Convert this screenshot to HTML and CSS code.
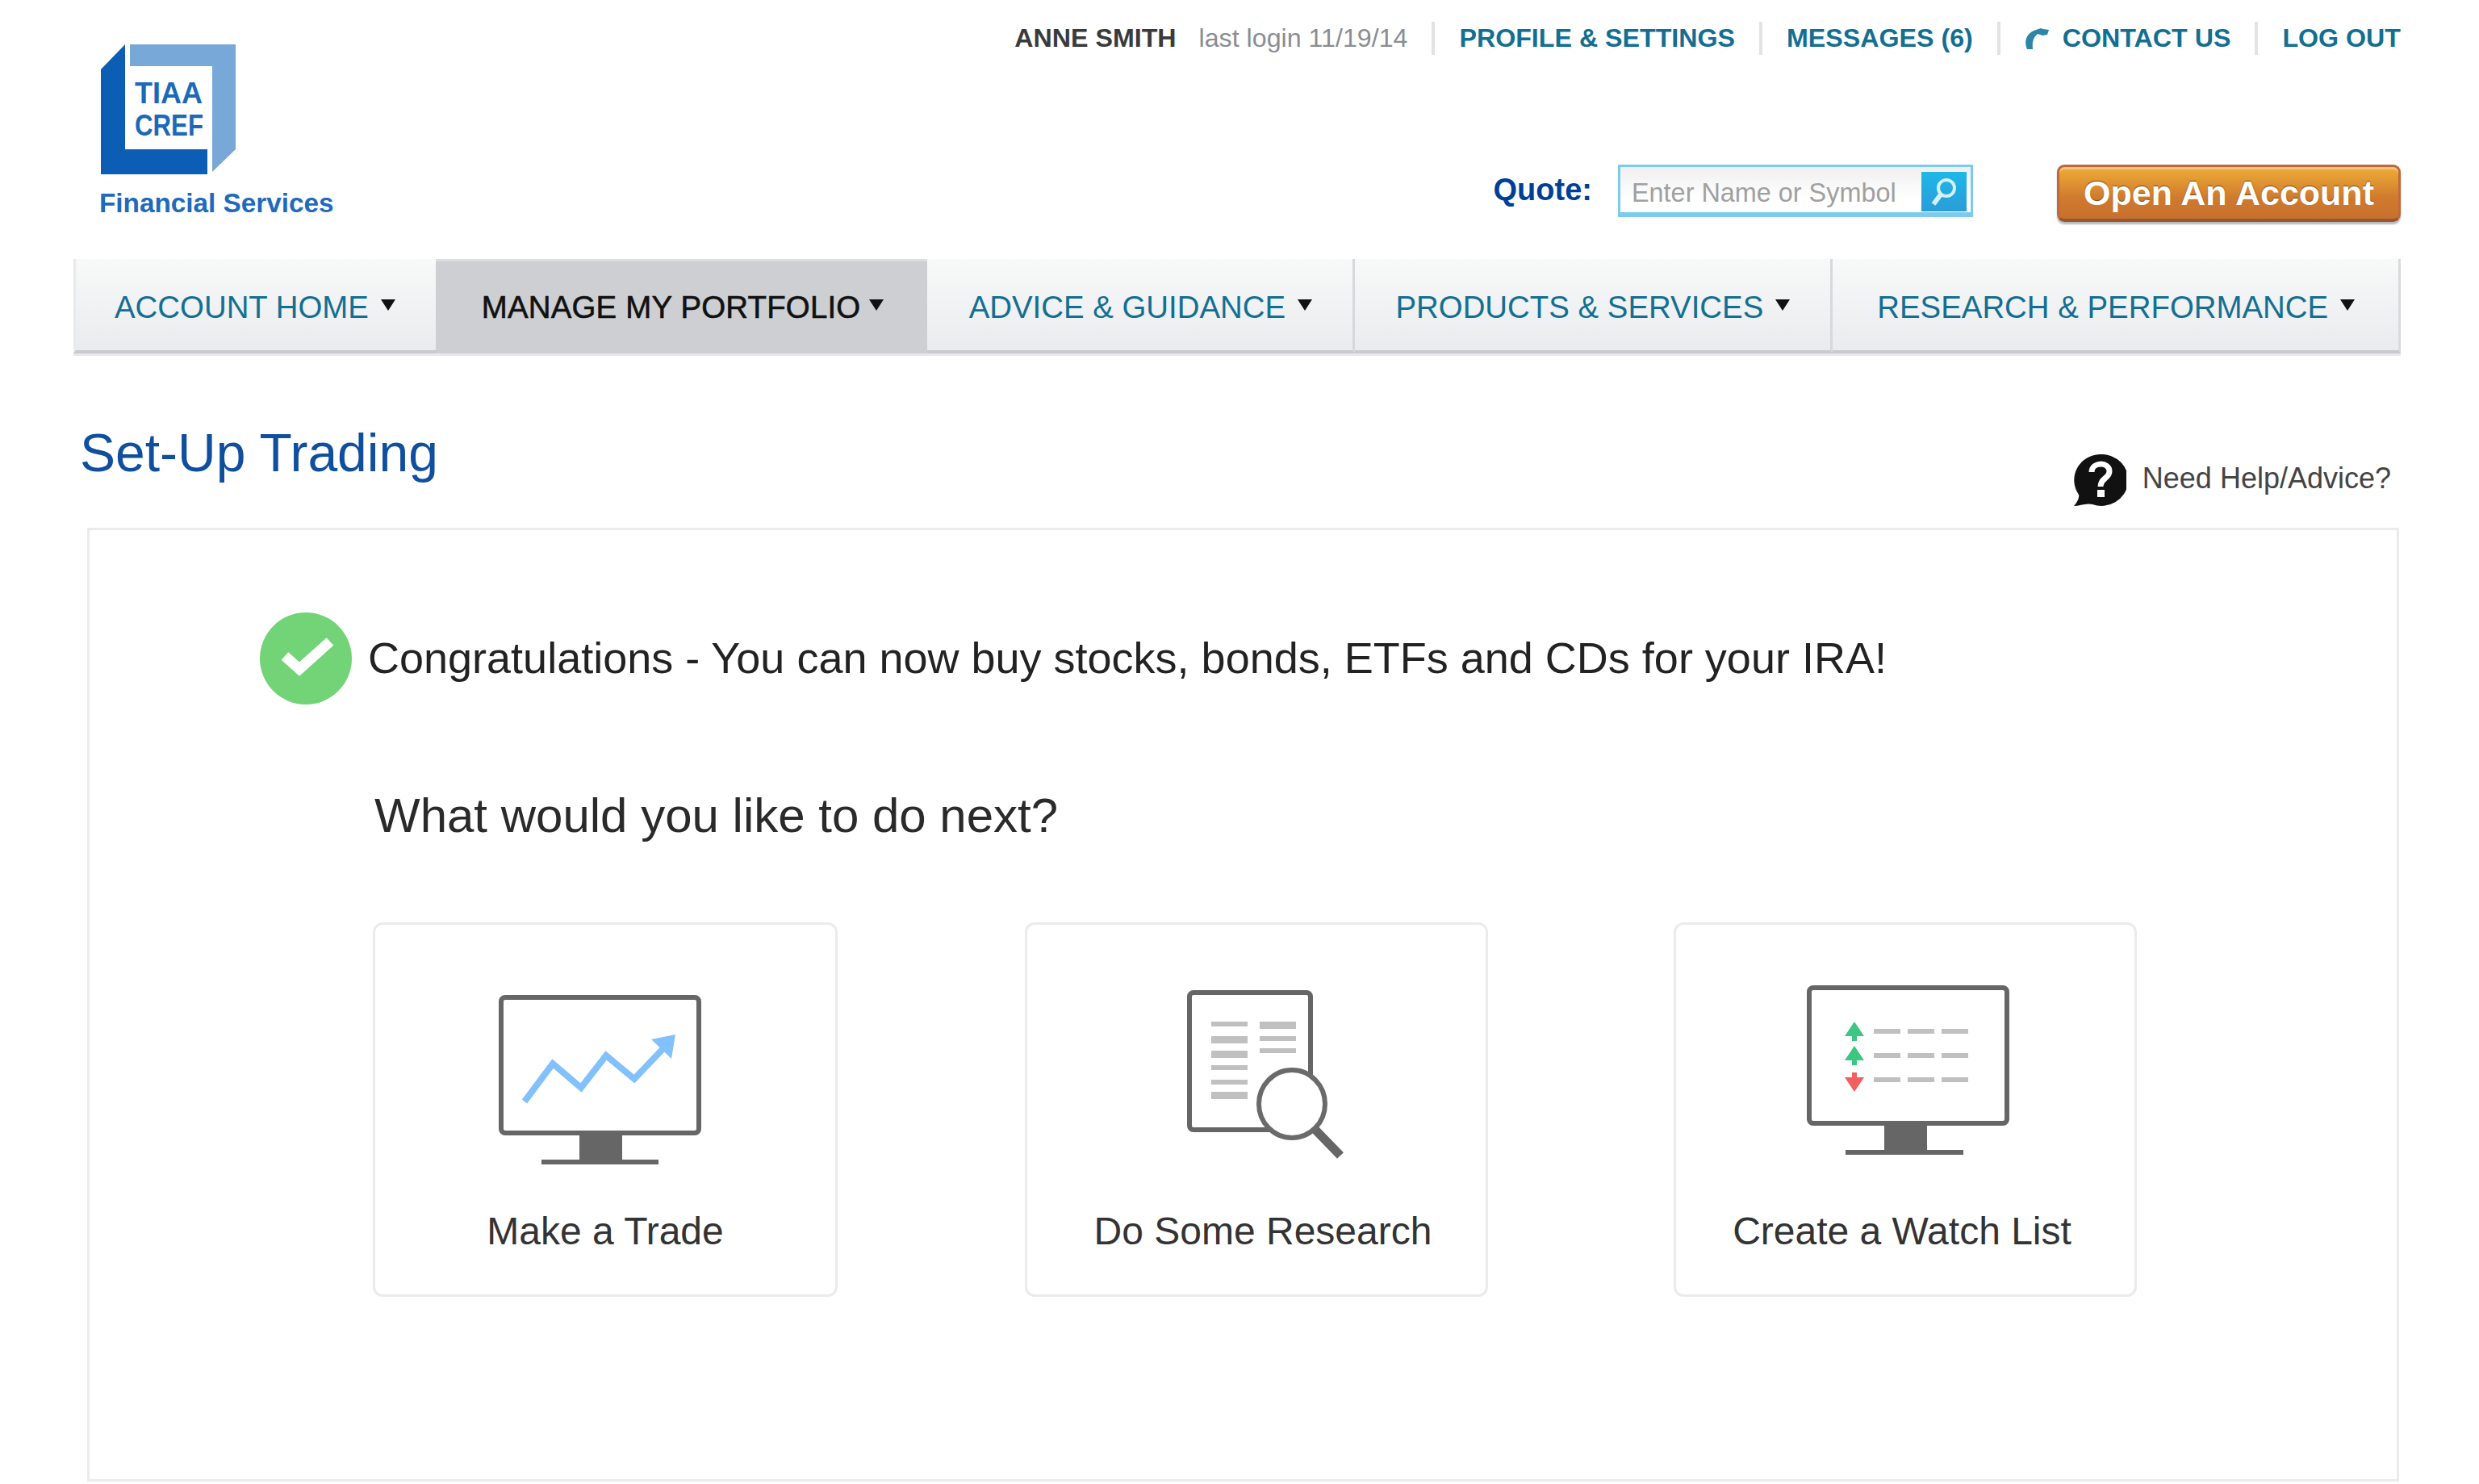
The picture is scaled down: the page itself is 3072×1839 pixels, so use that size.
FILE: index.html
```html
<!DOCTYPE html>
<html lang="en">
<head>
<meta charset="utf-8">
<title>Set-Up Trading</title>
<link rel="stylesheet" href="styles.css">
</head>
<body>
<div class="page">
  <header class="header">
    <div class="brand">
      <svg class="logo" width="170" height="164" viewBox="0 0 170 164">
        <polygon class="logo-dark" points="1,34 31,3 31,133 133,133 133,164 1,164"/>
        <polygon class="logo-light" points="37,3 168,3 168,133 139,161 139,30 37,30"/>
        <text class="logo-text" x="43" y="76" textLength="84" lengthAdjust="spacingAndGlyphs">TIAA</text>
        <text class="logo-text" x="43" y="116" textLength="85" lengthAdjust="spacingAndGlyphs">CREF</text>
      </svg>
      <div class="brand-name">Financial Services</div>
    </div>
    <div class="header-right">
      <div class="util">
        <span class="util-name">ANNE SMITH</span>
        <span class="util-login">last login 11/19/14</span>
        <span class="util-sep"></span>
        <a class="util-link">PROFILE &amp; SETTINGS</a>
        <span class="util-sep"></span>
        <a class="util-link">MESSAGES (6)</a>
        <span class="util-sep"></span>
        <svg class="phone" width="30" height="26" viewBox="0 0 30 26"><path d="M3 26 C-2 14 4 5 14 2 L20 0 L23 1 L30 2 L28 8 L22 9 L16 7 C11 11 9 17 10 26 Z"/></svg>
        <a class="util-link util-contact">CONTACT US</a>
        <span class="util-sep"></span>
        <a class="util-link">LOG OUT</a>
      </div>
      <div class="tools">
        <label class="quote-label">Quote:</label>
        <div class="quote-box">
          <span class="quote-placeholder">Enter Name or Symbol</span>
          <span class="quote-go">
            <svg width="36" height="38" viewBox="0 0 36 38"><circle cx="21" cy="14" r="10" fill="none" stroke="#d4f1fb" stroke-width="4"/><line x1="14" y1="22" x2="5" y2="34" stroke="#d4f1fb" stroke-width="6"/></svg>
          </span>
        </div>
        <button class="open-btn">Open An Account</button>
      </div>
    </div>
  </header>

  <nav class="nav">
    <a class="tab tab-home">ACCOUNT HOME<i class="caret"></i></a>
    <a class="tab tab-manage is-active">MANAGE MY PORTFOLIO<i class="caret"></i></a>
    <a class="tab tab-advice">ADVICE &amp; GUIDANCE<i class="caret"></i></a>
    <a class="tab tab-products">PRODUCTS &amp; SERVICES<i class="caret"></i></a>
    <a class="tab tab-research">RESEARCH &amp; PERFORMANCE<i class="caret"></i></a>
  </nav>

  <div class="title-row">
    <h1 class="title">Set-Up Trading</h1>
    <div class="help">
      <svg width="66" height="64" viewBox="0 0 66 64"><path fill="#111" d="M33 0 A33 32 0 1 1 24 62 C16 60 8 64 1 64 C5 59 8 54 7 50 A33 32 0 0 1 33 0 Z"/><path fill="none" stroke="#fff" stroke-width="7" d="M23 22 C23 9 45 9 45 21 C45 30 34 29 34 40"/><rect x="30" y="44" width="9" height="9" fill="#fff"/></svg>
      <span class="help-text">Need Help/Advice?</span>
    </div>
  </div>

  <main class="panel">
    <div class="congrats">
      <svg width="114" height="114" viewBox="0 0 114 114"><circle cx="57" cy="57" r="57" fill="#72d377"/><path d="M31 54 L49 70 L87 36" fill="none" stroke="#fff" stroke-width="13"/></svg>
      <p class="congrats-text">Congratulations - You can now buy stocks, bonds, ETFs and CDs for your IRA!</p>
    </div>
    <h2 class="next">What would you like to do next?</h2>
    <div class="cards">
      <a class="card card-trade">
        <svg class="icon" width="251" height="210" viewBox="0 0 251 210">
          <rect class="frame" x="3" y="3" width="245" height="168" rx="5"/>
          <rect class="solid" x="100" y="172" width="53" height="32"/>
          <rect class="solid" x="53" y="204" width="145" height="6"/>
          <polyline class="chart" points="32,132 67,85 102,115 133,75 168,104 208,62"/>
          <polygon class="chart-head" points="219,49 189,55 214,79"/>
        </svg>
        <span class="card-label">Make a Trade</span>
      </a>
      <a class="card card-research">
        <svg class="icon" width="195" height="209" viewBox="0 0 195 209">
          <rect class="frame" x="3" y="3" width="150" height="170" rx="5"/>
          <g class="bars">
            <rect x="30" y="39" width="45" height="6"/><rect x="30" y="57" width="45" height="9"/><rect x="30" y="75" width="45" height="9"/><rect x="30" y="93" width="45" height="6"/><rect x="30" y="111" width="45" height="6"/><rect x="30" y="126" width="45" height="9"/>
            <rect x="90" y="39" width="45" height="9"/><rect x="90" y="57" width="45" height="6"/><rect x="90" y="72" width="45" height="6"/>
          </g>
          <line class="handle" x1="158" y1="172" x2="190" y2="205"/>
          <ellipse class="lens" cx="130" cy="141" rx="41" ry="42"/>
        </svg>
        <span class="card-label">Do Some Research</span>
      </a>
      <a class="card card-watch">
        <svg class="icon" width="251" height="210" viewBox="0 0 251 210">
          <rect class="frame" x="3" y="3" width="245" height="168" rx="5"/>
          <rect class="solid" x="96" y="172" width="53" height="32"/>
          <rect class="solid" x="48" y="204" width="146" height="6"/>
          <polygon class="up" points="59,45 71,63 62,63 62,69 56,69 56,63 47,63"/>
          <polygon class="up" points="59,75 71,93 62,93 62,99 56,99 56,93 47,93"/>
          <polygon class="down" points="56,108 62,108 62,114 71,114 59,132 47,114 56,114"/>
          <g class="bars">
            <rect x="83" y="54" width="33" height="6"/><rect x="125" y="54" width="33" height="6"/><rect x="167" y="54" width="33" height="6"/>
            <rect x="83" y="84" width="33" height="6"/><rect x="125" y="84" width="33" height="6"/><rect x="167" y="84" width="33" height="6"/>
            <rect x="83" y="114" width="33" height="6"/><rect x="125" y="114" width="33" height="6"/><rect x="167" y="114" width="33" height="6"/>
          </g>
        </svg>
        <span class="card-label">Create a Watch List</span>
      </a>
    </div>
  </main>
</div>
</body>
</html>
```
FILE: styles.css
```css
* { box-sizing: border-box; }
html, body { margin: 0; padding: 0; background: #fff; }
body { font-family: "Liberation Sans", Arial, sans-serif; color: #333; width: 3072px; height: 1839px; overflow: hidden; }
.page { padding: 0 97px 0 91px; }
a { text-decoration: none; color: inherit; }

.header { display: flex; height: 321px; }
.brand { margin-left: 33px; padding-top: 52px; width: 300px; }
.logo { display: block; }
.logo-dark { fill: #0b5eb4; }
.logo-light { fill: #78a8d8; }
.logo-text { font: bold 37px "Liberation Sans", sans-serif; fill: #1b69b8; }
.brand-name { margin-top: 17px; font-size: 33.3px; line-height: 38px; font-weight: bold; color: #1f6abb; white-space: nowrap; margin-left: -1px; }

.header-right { flex: 1; display: flex; flex-direction: column; align-items: flex-end; }
.util { display: flex; align-items: center; margin-top: 27px; height: 41px; font-size: 32.2px; white-space: nowrap; }
.util-name { font-weight: bold; color: #3a3a3a; }
.util-login { margin-left: 28px; color: #8a8d92; }
.util-sep { width: 4px; height: 41px; background: #e3e3e3; margin: 0 30px 0 30px; }
.util-link { font-weight: bold; color: #136f92; }
.phone { fill: #2b86a8; margin-right: 17px; }

.tools { display: flex; align-items: flex-start; margin-top: 136px; }
.quote-label { font-size: 38px; font-weight: bold; color: #003f98; line-height: 44px; margin: 9px 32px 0 0; }
.quote-box { width: 440px; height: 65px; border: 3px solid #7ccaec; border-bottom-width: 6px; background: linear-gradient(#efefef, #fff 70%); display: flex; align-items: center; justify-content: space-between; padding: 5px 5px 0 14px; }
.quote-placeholder { font-size: 32.4px; color: #a0a0a0; white-space: nowrap; margin-top: 4px; }
.quote-go { width: 56px; height: 49px; background: linear-gradient(#1db8e8, #2b9cd8); display: flex; align-items: center; justify-content: center; }
.open-btn { width: 426px; height: 71px; margin-left: 104px; border: 3px solid #c1683a; border-bottom: 4px solid #9a5630; border-radius: 9px; background: linear-gradient(#efad36, #cf7a2e 60%, #c8702e); box-shadow: 0 3px 2px #b4bcbf, inset 0 3px 0 #f4c27a; color: #fff; font: bold 43px "Liberation Sans", sans-serif; text-shadow: 0 -1px 1px #7a4a10; padding: 0; }

.nav { display: flex; height: 120px; border-bottom: 3px solid #e8e9ec; }
.tab { display: flex; align-items: flex-start; padding-top: 38px; font-size: 38.4px; line-height: 44px; color: #136f92; white-space: nowrap; background: linear-gradient(#f8f9f9, #e9ebed); border-bottom: 4px solid #c8cacf; }
.tab-home { width: 449px; padding-left: 48px; border-left: 3px solid #e8e9ec; }
.tab-manage { width: 609px; padding-left: 57px; }
.tab-advice { width: 531px; padding-left: 52px; border-right: 3px solid #d6d8dc; }
.tab-products { width: 592px; padding-left: 50px; border-right: 3px solid #d6d8dc; }
.tab-research { width: 704px; padding-left: 55px; border-right: 3px solid #d8dade; }
.tab.is-active { background: #cdcfd3; border-top: 3px solid #dcdde0; border-bottom-color: #cdcfd3; color: #111; padding-top: 35px; letter-spacing: 0.2px; -webkit-text-stroke: 0.6px #111; }
.tab.is-active .caret { margin-left: 11px; }
.caret { width: 0; height: 0; margin: 12px 0 0 15px; border-left: 9px solid transparent; border-right: 9px solid transparent; border-top: 14px solid #111; }

.title-row { display: flex; justify-content: space-between; align-items: flex-start; height: 213px; padding: 82px 0 0 8px; }
.title { margin: 0; font-size: 66px; line-height: 76px; font-weight: normal; color: #0f4f9e; }
.help { display: flex; align-items: center; gap: 20px; margin: 40px 12px 0 0; font-size: 36px; color: #444; }
.help-text { padding-bottom: 4px; }

.panel { margin: 0 2px 0 17px; height: 1182px; border: 3px solid #ebebeb; padding-top: 102px; }
.congrats { display: flex; align-items: center; gap: 20px; padding-left: 211px; }
.congrats-text { margin: 0; padding-bottom: 3px; font-size: 54px; line-height: 60px; color: #222; white-space: nowrap; }
.next { margin: 104px 0 0 353px; font-size: 60px; line-height: 68px; font-weight: normal; color: #2a2a2a; }
.cards { display: flex; margin: 98px 0 0 351px; gap: 230px; }
.card { width: 574px; height: 464px; border: 3px solid #ebebeb; border-radius: 12px; display: flex; flex-direction: column; align-items: center; position: relative; }
.card-trade { width: 576px; }
.card-research { margin-left: 2px; }
.icon { display: block; flex: none; }
.card-trade .icon { margin-top: 87px; margin-left: -14px; }
.card-research .icon { margin-top: 81px; margin-left: 22px; }
.card-watch .icon { margin-top: 75px; margin-left: 7px; }
.card-label { font-size: 48px; line-height: 54px; color: #333; white-space: nowrap; }
.card-trade .card-label { margin-top: 56px; }
.card-research .card-label { margin-top: 63px; margin-left: 16px; }
.card-watch .card-label { margin-top: 68px; margin-left: -8px; }
.frame { fill: #fff; stroke: #666; stroke-width: 6; }
.solid { fill: #666; }
.chart { fill: none; stroke: #82c1fb; stroke-width: 8; }
.chart-head { fill: #82c1fb; }
.bars rect { fill: #c0c0c0; }
.lens { fill: #fff; stroke: #6a6a6a; stroke-width: 6; }
.handle { stroke: #666; stroke-width: 11; }
.up { fill: #3cc67f; }
.down { fill: #f25f5f; }
```
